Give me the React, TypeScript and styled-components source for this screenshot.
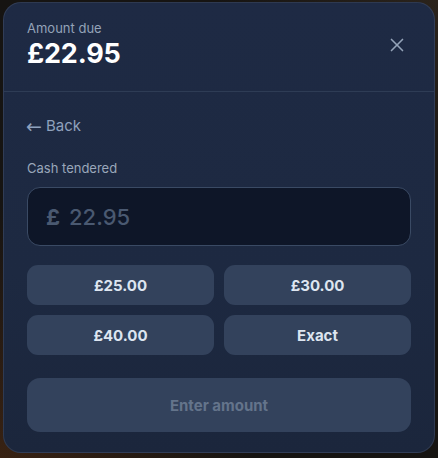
import React from "react";
import styled, { createGlobalStyle } from "styled-components";

const Global = createGlobalStyle`
  html, body { margin: 0; padding: 0; }
  body {
    width: 438px;
    height: 458px;
    overflow: hidden;
    background:
      radial-gradient(circle at 0% 100%, rgba(120, 60, 20, 0.35), transparent 40%),
      radial-gradient(circle at 100% 0%, rgba(90, 70, 50, 0.3), transparent 35%),
      #161412;
    font-family: Inter, "Noto Sans", sans-serif;
  }
`;

const Page = styled.div`
  padding: 2px 3px;
`;

const Card = styled.div`
  box-sizing: border-box;
  width: 432px;
  height: 451px;
  border-radius: 18px;
  border: 1px solid rgba(148, 163, 184, 0.16);
  background: linear-gradient(180deg, #1e2a44 0%, #1d2941 60%, #1b263c 100%);
  display: flex;
  flex-direction: column;
  overflow: hidden;
`;

const Header = styled.div`
  display: flex;
  align-items: center;
  justify-content: space-between;
  padding: 16px 23px 20px;
  border-bottom: 1px solid #2e3c55;
`;

const Titles = styled.div`
  display: flex;
  flex-direction: column;
`;

const Label = styled.div`
  font-size: 13px;
  line-height: 18px;
  color: #94a3b8;
`;

const Amount = styled.div`
  font-size: 27px;
  line-height: 34px;
  font-weight: 700;
  color: #ffffff;
  letter-spacing: -0.2px;
`;

const CloseButton = styled.button`
  width: 32px;
  height: 32px;
  margin-right: -2px;
  border: none;
  background: transparent;
  display: flex;
  align-items: center;
  justify-content: center;
  padding: 0;
  color: #94a3b8;
  cursor: pointer;
`;

const Body = styled.div`
  display: flex;
  flex-direction: column;
  padding: 24px 23px 0;
`;

const BackLink = styled.button`
  align-self: flex-start;
  border: none;
  background: transparent;
  padding: 0;
  font-family: inherit;
  font-size: 15px;
  line-height: 20px;
  color: #8fa1bd;
  cursor: pointer;
  display: flex;
  align-items: center;
  gap: 4px;
`;

const Arrow = styled.span`
  font-family: "DejaVu Sans", sans-serif;
  font-size: 19px;
  line-height: 20px;
  margin-left: -1px;
`;

const FieldLabel = styled(Label)`
  margin-top: 23px;
  margin-bottom: 10px;
  color: #9aa7ba;
`;

const InputBox = styled.div`
  box-sizing: border-box;
  height: 59px;
  border-radius: 13px;
  border: 1px solid #3a4a64;
  background: #0e1628;
  display: flex;
  align-items: center;
  padding: 0 18px;
  gap: 9px;
`;

const Currency = styled.span`
  font-size: 22px;
  font-weight: 700;
  color: #4a5971;
`;

const AmountInput = styled.input`
  flex: 1;
  min-width: 0;
  border: none;
  outline: none;
  background: transparent;
  font-family: inherit;
  font-size: 22px;
  font-weight: 500;
  color: #e2e8f0;
  padding: 0;
  &::placeholder {
    color: #4a5971;
  }
`;

const QuickGrid = styled.div`
  margin-top: 19px;
  display: grid;
  grid-template-columns: 1fr 1fr;
  gap: 10px;
`;

const QuickButton = styled.button`
  height: 40px;
  border: none;
  border-radius: 11px;
  background: #33425c;
  color: #dde5f0;
  font-family: inherit;
  font-size: 15px;
  font-weight: 700;
  cursor: pointer;
`;

const SubmitButton = styled.button<{ $disabled?: boolean }>`
  margin-top: 23px;
  height: 54px;
  border: none;
  border-radius: 13px;
  background: #33425c;
  color: ${(p) => (p.$disabled ? "#64748b" : "#ffffff")};
  font-family: inherit;
  font-size: 15px;
  font-weight: 700;
  cursor: ${(p) => (p.$disabled ? "default" : "pointer")};
`;

const quick = ["£25.00", "£30.00", "£40.00", "Exact"];

export default function App() {
  return (
    <>
      <Global />
      <Page>
        <Card>
          <Header>
            <Titles>
              <Label>Amount due</Label>
              <Amount>£22.95</Amount>
            </Titles>
            <CloseButton aria-label="Close">
              <svg width="22" height="22" viewBox="0 0 24 24" fill="none" stroke="currentColor" strokeWidth="1.8" strokeLinecap="round">
                <path d="M18 6 6 18" />
                <path d="m6 6 12 12" />
              </svg>
            </CloseButton>
          </Header>
          <Body>
            <BackLink>
              <Arrow>←</Arrow>
              Back
            </BackLink>
            <FieldLabel>Cash tendered</FieldLabel>
            <InputBox>
              <Currency>£</Currency>
              <AmountInput placeholder="22.95" inputMode="decimal" />
            </InputBox>
            <QuickGrid>
              {quick.map((q) => (
                <QuickButton key={q}>{q}</QuickButton>
              ))}
            </QuickGrid>
            <SubmitButton $disabled>Enter amount</SubmitButton>
          </Body>
        </Card>
      </Page>
    </>
  );
}
